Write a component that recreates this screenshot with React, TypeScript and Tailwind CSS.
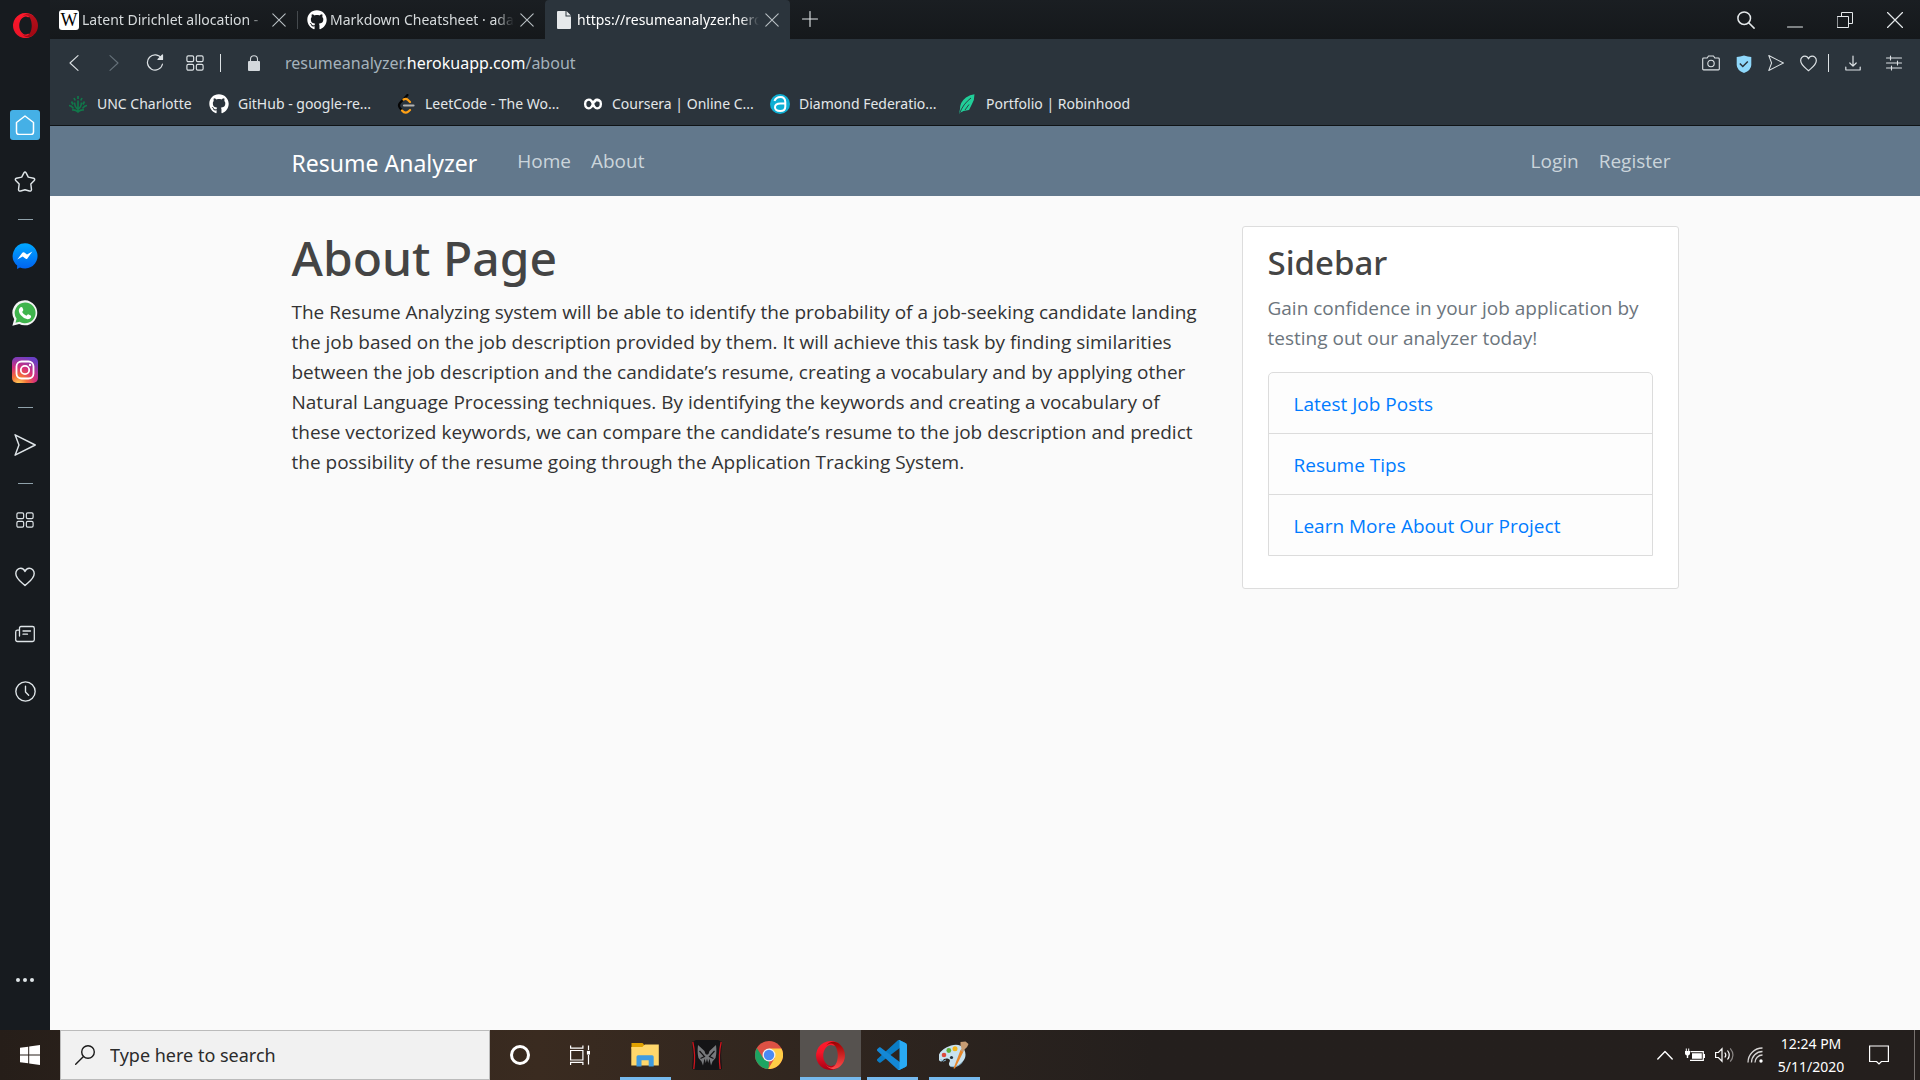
import React from 'react';
import { FaGithub } from 'react-icons/fa';

type SvgProps = { children: React.ReactNode; box?: string; className?: string; width?: number };

function Line({ children, box = '0 0 20 20', className = 'size-5', width = 1.2 }: SvgProps) {
  return (
    <svg
      viewBox={box}
      className={className}
      fill="none"
      stroke="currentColor"
      strokeWidth={width}
      strokeLinecap="round"
      strokeLinejoin="round"
      aria-hidden="true"
    >
      {children}
    </svg>
  );
}

function OperaLogo({ className, id, lit }: { className: string; id: string; lit?: boolean }) {
  return (
    <svg viewBox="0 0 30 30" className={className} aria-hidden="true">
      <defs>
        <linearGradient id={id + 'a'} x1="0" y1="0" x2="0" y2="1">
          <stop offset="0" stopColor="#ff1b2d" />
          <stop offset="0.4" stopColor="#f41529" />
          <stop offset="1" stopColor={lit ? '#a70014' : '#ec1528'} />
        </linearGradient>
        <linearGradient id={id + 'b'} x1="0" y1="0" x2="0" y2="1">
          <stop offset="0" stopColor={lit ? '#9c0000' : '#b8101c'} />
          <stop offset="1" stopColor={lit ? '#ff4b4b' : '#a00812'} />
        </linearGradient>
      </defs>
      <path
        fill={`url(#${id}a)`}
        fillRule="evenodd"
        d="M15 0a15 15 0 1 0 10 26.2L18 25C14 28 7.500 23 7.500 15S14 2 18 5L25 3.800A15 15 0 0 0 15 0Z"
      />
      <path
        fill={`url(#${id}b)`}
        d="M10 5.600C11.800 3.500 13.600 2.600 15.500 2.600 19.600 2.600 22.500 8 22.500 15S19.600 27.400 15.500 27.400C13.600 27.400 11.800 26.500 10 24.400 14 30.500 20.500 30.200 25 26.200 28.200 23.400 30 19.400 30 15S28.200 6.600 25 3.800C20.500-.2 14-.5 10 5.600Z"
      />
    </svg>
  );
}

const Home = () => (
  <span className="flex size-[30px] items-center justify-center rounded-[3px] bg-[#45b0e6] text-white">
    <Line className="size-5" width={1.5}>
      <path d="M10 1 1.500 7.500V17q0 2.500 2.500 2.500h12q2.500 0 2.500-2.500V7.500Z" />
    </Line>
  </span>
);
const Star = () => (
  <Line className="size-[22px]" width={1.3}>
    <path d="M9 1.700q1-1.600 2 0l2 3.900 4.800 1q1.700.6.600 2L15.300 11.800l.6 5.200q-.2 1.700-1.900 1.200L10 17l-4 1.200q-1.700.5-1.900-1.200l.6-5.200L1.600 8.600q-1.100-1.400.6-2l4.800-1Z" />
  </Line>
);
const Send = ({ className = 'size-[22px]' }: { className?: string }) => (
  <Line className={className} width={1.3}>
    <path d="M1 .7 19.300 10 1 19.300 4.500 10Z" />
  </Line>
);
const Heart = ({ className = 'size-5' }: { className?: string }) => (
  <Line className={className} width={1.4}>
    <path d="M10 4.500C9 2 7.500 1.300 5.800 1.300 3 1.300.8 3.500.8 6.500.8 12 6.500 15 10 18.500 13.500 15 19.200 12 19.200 6.500c0-3-2.200-5.200-5-5.200C12.500 1.300 11 2 10 4.500Z" />
  </Line>
);
const Tiles = ({ className = 'size-[18px]' }: { className?: string }) => (
  <Line className={className} width={1.3}>
    <rect x="1" y="2" width="7.500" height="6.500" rx="1.500" />
    <rect x="11.500" y="2" width="7.500" height="6.500" rx="1.500" />
    <rect x="1" y="11.500" width="7.500" height="6.500" rx="1.500" />
    <rect x="11.500" y="11.500" width="7.500" height="6.500" rx="1.500" />
  </Line>
);
const News = () => (
  <Line className="size-5" width={1.3}>
    <path d="M4.500 12V4q0-1.500 1.500-1.500h11.500q1.800 0 1.800 1.800v11.400q0 1.800-1.800 1.800H2.500Q.7 17.500.7 15.700V8q0-1.800 1.800-1.800h2M8 7h7.500M8 10.200h4.500" />
  </Line>
);
const Clock = () => (
  <Line className="size-[21px]" width={1.3}>
    <circle cx="10" cy="10" r="9.200" />
    <path d="M10 5v5.500l3 3" />
  </Line>
);
const Messenger = () => (
  <svg viewBox="0 0 26 26" className="size-[26px]" aria-hidden="true">
    <defs>
      <linearGradient id="msg" x1="0" y1="0" x2="0" y2="1">
        <stop offset="0" stopColor="#00a8ff" />
        <stop offset="1" stopColor="#0062f0" />
      </linearGradient>
    </defs>
    <path fill="url(#msg)" d="M13 .3a12.600 12.600 0 1 1-5 24.200L5 26l.2-3.500A12.600 12.600 0 0 1 13 .3Z" />
    <path fill="#fff" d="m5.300 16.400 5-6.600q.9-1 2.100-.2l2.600 2 5.400-3.200-5 7q-.9 1-2.100.1l-2.600-2Z" />
  </svg>
);
const Whatsapp = () => (
  <svg viewBox="0 0 26 26" className="size-[26px]" aria-hidden="true">
    <path fill="#f4f4f4" d="M13 .3A12.500 12.500 0 1 1 7.200 24L.4 25.800l1.800-6.600A12.500 12.500 0 0 1 13 .3Z" />
    <path fill="#3fb44c" d="M13 2.500A10.400 10.400 0 1 1 7.600 21.700L3.500 22.800l1.100-4A10.400 10.400 0 0 1 13 2.500Z" />
    <path
      fill="#fff"
      d="M8.500 7.200q1.400-.8 1.900.4l.9 2.200q.2.700-1.200 2.100 1.600 2.900 4.300 3.900 1.100-1.600 1.800-1.500l2.500 1.200q.8.500.2 1.900-1.100 2-3.400 1.800-3.700-.5-6.600-4-2.700-3.300-1.900-6 .4-1.200 1.500-2Z"
    />
  </svg>
);
const Instagram = () => (
  <svg viewBox="0 0 26 26" className="size-[26px]" aria-hidden="true">
    <defs>
      <radialGradient id="ig" cx="0.25" cy="1.05" r="1.1">
        <stop offset="0" stopColor="#ffd65a" />
        <stop offset="0.3" stopColor="#f5703a" />
        <stop offset="0.6" stopColor="#d62f7c" />
        <stop offset="1" stopColor="#6a3fc4" />
      </radialGradient>
    </defs>
    <rect width="26" height="26" rx="5" fill="url(#ig)" />
    <g fill="none" stroke="#fff" strokeWidth="1.800">
      <rect x="4.500" y="4.500" width="17" height="17" rx="5" />
      <circle cx="13" cy="13" r="4.200" />
    </g>
    <circle cx="18" cy="8" r="1.200" fill="#fff" />
  </svg>
);

function RailGroup({ items }: { items: [string, React.ReactNode][] }) {
  return (
    <div className="flex w-full flex-col gap-px">
      {items.map(([name, icon]) => (
        <button key={name} type="button" aria-label={name} className="flex h-14 w-full items-center justify-center">
          {icon}
        </button>
      ))}
    </div>
  );
}
const Dash = () => (
  <div className="flex h-[18px] items-center">
    <div className="h-px w-[15px] bg-[#8fa1aa]" />
  </div>
);

function Rail() {
  return (
    <aside className="flex w-[50px] shrink-0 flex-col items-center bg-[#171b1f] text-[#dfe5e8]">
      <button type="button" aria-label="Opera menu" className="mb-[59px] flex pt-[13px]">
        <OperaLogo id="rail" className="size-[25px]" />
      </button>
      <RailGroup items={[['Home', <Home />], ['Bookmarks', <Star />]]} />
      <Dash />
      <RailGroup items={[['Messenger', <Messenger />], ['WhatsApp', <Whatsapp />], ['Instagram', <Instagram />]]} />
      <Dash />
      <div className="w-full py-px">
        <RailGroup items={[['My Flow', <Send />]]} />
      </div>
      <Dash />
      <RailGroup items={[['Speed Dial', <Tiles />], ['Likes', <Heart />], ['News', <News />], ['History', <Clock />]]} />
      <button type="button" aria-label="More" className="mt-auto mb-10 flex h-5 w-full items-center justify-center">
        <svg viewBox="0 0 18 4" className="h-1 w-[18px]" fill="currentColor" aria-hidden="true">
          <circle cx="2" cy="2" r="2" />
          <circle cx="9" cy="2" r="2" />
          <circle cx="16" cy="2" r="2" />
        </svg>
      </button>
    </aside>
  );
}

const Cross = () => (
  <Line box="0 0 14 14" className="size-3.5" width={1.1}>
    <path d="M.8.8l12.400 12.400M13.200.8.8 13.200" />
  </Line>
);

function Tab({ icon, title, active }: { icon: React.ReactNode; title: string; active?: boolean }) {
  return (
    <div
      className={
        active
          ? 'flex w-[245px] items-center rounded-t bg-[#2b343c] pr-[11px] pl-[9px] text-white'
          : 'flex w-[247px] items-center pr-[11px] pl-[9px] text-[#d6dadc]'
      }
    >
      <span className="flex w-5 shrink-0 justify-center">{icon}</span>
      <button
        type="button"
        className="ml-[3px] min-w-0 flex-1 overflow-hidden text-left text-sm whitespace-nowrap [mask-image:linear-gradient(to_right,black_90%,transparent_100%)]"
      >
        {title}
      </button>
      <button type="button" aria-label={'Close ' + title} className="ml-1.5 text-[#b9c0c4]">
        <Cross />
      </button>
    </div>
  );
}

const Wiki = () => (
  <span className="flex size-5 items-center justify-center rounded-[3px] bg-white font-['Liberation_Serif',serif] text-lg leading-none text-black">
    W
  </span>
);
const PageIcon = () => (
  <svg viewBox="0 0 14 18" className="h-[18px] w-3.5" aria-hidden="true">
    <path fill="#e6e9eb" d="M1 0h7.500v5.500H14V17q0 1-1 1H1q-1 0-1-1V1q0-1 1-1ZM9.500 0 14 4.500H9.500Z" />
  </svg>
);

function TabStrip() {
  return (
    <header className="flex h-[39px] bg-linear-to-b from-[#1a1e22] to-[#15181b] text-[#e4e8ea]">
      <Tab icon={<Wiki />} title="Latent Dirichlet allocation -" />
      <div className="my-auto h-[18px] w-px bg-[#454a4e]" />
      <Tab icon={<FaGithub className="size-5 text-white" />} title="Markdown Cheatsheet · ada" />
      <Tab active icon={<PageIcon />} title="https://resumeanalyzer.hero" />
      <button type="button" aria-label="New tab" className="ml-3 pb-0.5">
        <Line box="0 0 16 16" className="size-4" width={1.1}>
          <path d="M8 .5v15M.5 8h15" />
        </Line>
      </button>
      <div className="ml-auto flex items-center gap-8 pr-[17px]">
        <button type="button" aria-label="Search tabs">
          <Line className="size-[18px]" width={1.7}>
            <circle cx="8" cy="8" r="7" />
            <path d="m13 13 6 6" />
          </Line>
        </button>
        <button type="button" aria-label="Minimize">
          <Line box="0 0 16 16" className="size-4" width={1.1}>
            <path d="M.5 15h15" />
          </Line>
        </button>
        <button type="button" aria-label="Restore" className="ml-0.5">
          <Line box="0 0 16 16" className="size-4" width={1}>
            <path d="M.5 4.500h11v11h-11zM4.500 4.500v-4h11v11h-4" />
          </Line>
        </button>
        <button type="button" aria-label="Close window" className="ml-0.5">
          <Line box="0 0 16 16" className="size-4" width={1.2}>
            <path d="m.5.5 15 15M15.500.5l-15 15" />
          </Line>
        </button>
      </div>
    </header>
  );
}

function AddressBar() {
  return (
    <div className="flex h-12 items-center pr-[17px] pl-4 text-[#dde2e5]">
      <button type="button" aria-label="Back" className="flex w-4 justify-center">
        <Line box="0 0 10 16" className="h-4 w-2.5" width={1.1}>
          <path d="M9 .7 1 8l8 7.300" />
        </Line>
      </button>
      <button type="button" aria-label="Forward" disabled className="ml-6 flex w-4 justify-center text-[#66717a]">
        <Line box="0 0 10 16" className="h-4 w-2.5" width={1.1}>
          <path d="m1 .7 8 7.300-8 7.300" />
        </Line>
      </button>
      <button type="button" aria-label="Reload" className="ml-6">
        <Line box="0 0 18 18" className="size-[18px]" width={1.2}>
          <path d="M15.600 4.600A7.600 7.600 0 1 0 16.500 10" />
          <path d="M16.500 1v4.500H12Z" fill="currentColor" />
        </Line>
      </button>
      <button type="button" aria-label="Speed Dial" className="ml-[22px]">
        <Tiles />
      </button>
      <div className="ml-4 h-[18px] w-px bg-[#dde2e5]" />
      <svg viewBox="0 0 12 16" className="ml-[27px] h-4 w-3" aria-hidden="true">
        <rect y="6" width="12" height="10" rx="1" fill="#d3d8dc" />
        <path d="M2.500 6.500V4.200a3.500 3.500 0 0 1 7 0v2.300" fill="none" stroke="#d3d8dc" strokeWidth="1.100" />
      </svg>
      <p className="ml-[25px] flex-1 text-base text-[#a5b2bb]">
        resumeanalyzer.<span className="text-white">herokuapp.com</span>/about
      </p>
      <div className="flex items-center gap-4">
        <button type="button" aria-label="Snapshot">
          <Line box="0 0 18 16" className="h-4 w-[18px]" width={1.1}>
            <path d="M1.600 3h3.600l1.300-2h5l1.300 2h3.600q.9 0 .9.900V14q0 .9-.9.900H1.600Q.7 14.900.7 14V3.900Q.7 3 1.600 3Z" />
            <circle cx="9" cy="8.500" r="3.200" />
          </Line>
        </button>
        <button type="button" aria-label="Ad blocker">
          <svg viewBox="0 0 16 18" className="mt-0.5 h-[18px] w-4" aria-hidden="true">
            <path fill="#8fd8fb" d="M8 .5q4 1.200 7.300 1.500v8q0 5-7.300 8-7.300-3-7.300-8V2Q4 1.700 8 .5Z" />
            <path d="m3.800 8.500 3 3 5-5" fill="none" stroke="#2b343c" strokeWidth="1.500" />
          </svg>
        </button>
        <button type="button" aria-label="Send to My Flow">
          <Send className="size-4" />
        </button>
        <button type="button" aria-label="Add to bookmarks">
          <Heart className="size-[17px]" />
        </button>
      </div>
      <div className="ml-[11px] h-[18px] w-px bg-[#dde2e5]" />
      <button type="button" aria-label="Downloads" className="ml-4">
        <Line box="0 0 16 16" className="size-4" width={1.2}>
          <path d="M8 1v10M4.800 8 8 11.200 11.200 8M.8 12v2.400q0 .6.600.6h13.200q.6 0 .6-.6V12" />
        </Line>
      </button>
      <button type="button" aria-label="Easy setup" className="mr-px ml-[25px]">
        <Line box="0 0 16 16" className="size-4" width={1.1}>
          <path d="M.5 3h15M.5 8h15M.5 13h15M4.500 1v4M11.500 6v4M5.500 11v4" />
        </Line>
      </button>
    </div>
  );
}

const Crown = () => (
  <svg viewBox="0 0 20 18" className="h-[18px] w-5" fill="none" stroke="#11774a" strokeWidth="1.700" aria-hidden="true">
    <path d="M10 1v3M6 3l1.200 2.500M14 3l-1.200 2.500M10 5.500V17M6.500 7.500Q7 13 10 14q3-1 3.500-6.500M3.500 6.500l1.500 3M16.500 6.500l-1.500 3M1 10.500q2.500 0 4.500 3M19 10.500q-2.500 0-4.500 3M4 15q3.500-.5 6 2 2.500-2.500 6-2" />
  </svg>
);
const Infinity8 = () => (
  <svg viewBox="0 0 20 12" className="h-3 w-5" fill="none" stroke="#fff" strokeWidth="2.400" aria-hidden="true">
    <path d="M16 3.200C14 .6 11.500 1.500 10 6S6 11 3.800 9.800 1.500 3.500 3.800 2.200 8.500 1.500 10 6s4 5 6.200 3.800 2.300-6.300 0-7.600-4.200.6-5 1.800" />
  </svg>
);
const Diamond = () => (
  <svg viewBox="0 0 20 20" className="size-5" aria-hidden="true">
    <circle cx="10" cy="10" r="10" fill="#0fafd4" />
    <path
      d="M4.500 7Q6 3 10.500 3t4.800 5v4.500q0 4.500-5 4.500-5.300 0-5.300-3.700T10.500 9.500h4.500"
      fill="none"
      stroke="#fff"
      strokeWidth="2"
    />
  </svg>
);
const Feather = () => (
  <svg viewBox="0 0 18 20" className="h-5 w-[18px]" aria-hidden="true">
    <path fill="#21ce99" d="M1 20 2 15Q2 8 8 3.500 12 .5 16.500.2 16.500 6 14 10L11 16 5.500 17 2.500 18.500Z" />
    <path d="M1.500 19.500Q5 10 13 4M7 16l4-5.500" fill="none" stroke="#2b343c" strokeWidth="0.900" />
  </svg>
);
const Leet = () => (
  <svg viewBox="0 0 18 20" className="h-5 w-[18px]" fill="none" strokeWidth="2.200" strokeLinecap="round" aria-hidden="true">
    <path d="M10.500 1 3 9q-2 2.500 0 5l1.500 1.700" stroke="#050505" />
    <path d="M6.500 5.500q2.500-1.500 4.500.5l2 2M5 16.500q3 3.500 6.200 1.200l1.800-1.700" stroke="#ffa116" />
    <path d="M7 11.500h9.500" stroke="#b3b3b3" />
  </svg>
);

const bookmarks: [string, React.ReactNode][] = [
  ['UNC Charlotte', <Crown />],
  ['GitHub - google-re...', <FaGithub className="size-5 text-white" />],
  ['LeetCode - The Wo...', <Leet />],
  ['Coursera | Online C...', <Infinity8 />],
  ['Diamond Federatio...', <Diamond />],
  ['Portfolio | Robinhood', <Feather />],
];

function Bookmarks() {
  return (
    <nav aria-label="Bookmarks bar" className="flex h-[39px] border-b border-[#0f1316] pb-1 pl-[18px]">
      {bookmarks.map(([label, icon], i) => (
        <a
          key={label}
          href="#bookmark"
          className={
            i === 0
              ? 'flex w-[141px] items-center gap-[9px] text-sm whitespace-nowrap text-[#e3e7e9]'
              : 'flex w-[187px] items-center gap-[9px] text-sm whitespace-nowrap text-[#e3e7e9]'
          }
        >
          <span className="flex w-5 justify-center">{icon}</span>
          {label}
        </a>
      ))}
    </nav>
  );
}

function SitePage() {
  return (
    <div className="flex-1 bg-[#fafafa] font-['Open_Sans','Noto_Sans',sans-serif] text-[#333333]">
      <nav aria-label="Main" className="bg-[#62788c]">
        <div className="mx-auto flex h-[70px] max-w-[1425px] items-center px-[19px] text-[19px] text-[#cbd5db]">
          <a href="#top" className="mr-[30px] pt-1 font-['Noto_Sans',sans-serif] text-[23px] leading-8 text-white">
            Resume Analyzer
          </a>
          <a href="#home" className="px-2.5">
            Home
          </a>
          <a href="#about" className="px-2.5">
            About
          </a>
          <a href="#login" className="ml-auto px-2.5">
            Login
          </a>
          <a href="#register" className="pr-2 pl-2.5">
            Register
          </a>
        </div>
      </nav>
      <main className="mx-auto flex max-w-[1425px] items-start pt-[30px] text-[19px] leading-[30px]">
        <article className="w-2/3 px-[19px] pt-0.5">
          <h1 className="mb-[9px] font-['Noto_Sans',sans-serif] text-[48px] leading-[60px] font-medium text-[#444444]">
            About Page
          </h1>
          <p>
            The Resume Analyzing system will be able to identify the probability of a job-seeking candidate landing the
            job based on the job description provided by them. It will achieve this task by finding similarities
            between the job description and the candidate’s resume, creating a vocabulary and by applying other Natural
            Language Processing techniques. By identifying the keywords and creating a vocabulary of these vectorized
            keywords, we can compare the candidate’s resume to the job description and predict the possibility of the
            resume going through the Application Tracking System.
          </p>
        </article>
        <div className="w-1/3 px-[19px]">
          <aside className="rounded-[3px] border border-[#dddddd] bg-white px-[25px] pt-[15px] pb-8">
            <h2 className="mb-[9px] font-['Noto_Sans',sans-serif] text-[33px] leading-[42px] font-medium text-[#444444]">
              Sidebar
            </h2>
            <p className="mb-[19px] text-[#6c757d]">
              Gain confidence in your job application by testing out our analyzer today!
            </p>
            <ul className="divide-y divide-[#dcdcdc] rounded-t-[5px] border border-[#dcdcdc] bg-[#fdfdfd]">
              {['Latest Job Posts', 'Resume Tips', 'Learn More About Our Project'].map((t) => (
                <li key={t} className="px-[25px] pt-4 pb-3.5">
                  <a href="#link" className="text-[#007bff]">
                    {t}
                  </a>
                </li>
              ))}
            </ul>
          </aside>
        </div>
      </main>
    </div>
  );
}

const Explorer = () => (
  <svg viewBox="0 0 28 24" className="h-6 w-7" aria-hidden="true">
    <path fill="#e0a100" d="M.5 0h10.500q1 0 1.500 1l.8 1.500V6H.5Z" />
    <path fill="#ffd76b" d="M.3 4h11l2.500-2.500h14V22.500H.3Z" />
    <path fill="#3f9be0" d="M5.500 23.500V13.800q0-1.600 1.600-1.600h14q1.600 0 1.600 1.600v9.700h-5v-6.300h-7.200v6.300Z" />
  </svg>
);
const Predator = () => (
  <svg viewBox="0 0 30 30" className="size-[30px]" aria-hidden="true">
    <path fill="#141416" d="M4 0h22l4 2-1 13 1 14-4 1H4l-4-1 1-14L0 2Z" />
    <path d="M.8 2q3 13 1 27M29.200 2q-3 13-1 27" stroke="#d0141c" strokeWidth="1.300" fill="none" />
    <path
      fill="#77797c"
      d="m6 5 6.500 6 1 3 1.500.8 1.500-.8 1-3L24 5q1 8-.5 13l-3 3.500-1.500 4-1.500-7-1.300 4.500-1.200-4.500-1.200 4.500-1.300-4.500-1.500 7-1.500-4-3-3.500Q5 13 6 5Z"
    />
    <path d="m7.500 11 5 5.500-4 2M22.500 11l-5 5.500 4 2" stroke="#141416" strokeWidth="1.200" fill="none" />
  </svg>
);
const Chrome = () => (
  <svg viewBox="0 0 28 28" className="size-7" aria-hidden="true">
    <circle cx="14" cy="14" r="14" fill="#dd5144" />
    <path fill="#1da462" d="M1.880 7 8.370 17.500 14 20.500 13.500 28A14 14 0 0 1 1.880 7Z" />
    <path fill="#ffcd46" d="M14 7.500h12.400A14 14 0 0 1 13.200 28L19.600 17.300Z" />
    <circle cx="14" cy="14" r="6.500" fill="#f1f1f1" />
    <circle cx="14" cy="14" r="5.200" fill="#4a8af4" />
  </svg>
);
const Code = () => (
  <svg viewBox="0 0 100 100" className="size-[30px]" aria-hidden="true">
    <path
      fill="#0a7cc4"
      d="M96.460 10.800 75.860.880C73.470-.27 70.620.210 68.750 2.080L1.300 63.580c-1.810 1.660-1.810 4.520 0 6.170l5.510 5c1.490 1.350 3.720 1.450 5.320.24L93.360 13.370C96.090 11.300 100 13.250 100 16.670v-.24c0-2.400-1.380-4.590-3.540-5.630Z"
    />
    <path
      fill="#1488d6"
      d="m96.460 89.200-20.600 9.920c-2.390 1.150-5.240.670-7.110-1.200L1.300 36.420c-1.810-1.660-1.810-4.520 0-6.170l5.510-5c1.490-1.350 3.720-1.450 5.320-.24L93.360 86.630C96.090 88.700 100 86.750 100 83.330v.24c0 2.400-1.380 4.590-3.540 5.630Z"
    />
    <path
      fill="#29aaf4"
      d="M75.860 99.130c-2.390 1.150-5.240.660-7.110-1.210C71.060 100.220 75 98.590 75 95.330V4.670c0-3.260-3.940-4.900-6.250-2.590C70.620.210 73.470-.27 75.860.870l20.600 9.910C98.620 11.820 100 14.010 100 16.410v67.180c0 2.400-1.380 4.590-3.540 5.630Z"
    />
  </svg>
);
const Paint = () => (
  <svg viewBox="0 0 30 30" className="size-[30px]" aria-hidden="true">
    <path
      fill="#c8e2ef"
      d="M12 5.500Q21 3 25 9q4 8-2.500 14-6 5.500-11 3.500-2.500-1.500-1-4.500t-2-3.500-5 2-4.500-1.500Q-.5 9.500 12 5.500Z"
    />
    <path d="M1.500 19.500q3 3 5.500.5M11.500 26.500q7 1.500 12-4.500" stroke="#7fb0cc" strokeWidth="1" fill="none" />
    <circle cx="5" cy="15" r="2.300" fill="#dc4a3d" />
    <circle cx="9.800" cy="10.500" r="2.400" fill="#5fae3a" />
    <circle cx="16" cy="8.800" r="2.500" fill="#f3b41b" />
    <circle cx="12.500" cy="17.500" r="1.600" fill="#24313c" />
    <path d="M14.500 28.500 21.500 10l3 1.500L16 28.500Z" fill="#e8872b" />
    <path d="M22.500 8.500q-1.500-4-1-6.500l5-.5 3 2.500q-1 3.500-4 5.500l-1.500 2.500-2.500-1.500Z" fill="#c79c73" />
  </svg>
);

function TaskButton({ label, icon, open, focused }: { label: string; icon: React.ReactNode; open?: boolean; focused?: boolean }) {
  return (
    <button
      type="button"
      aria-label={label}
      className={
        focused
          ? 'flex h-full w-[61px] flex-col items-center bg-[#56524f]'
          : 'flex h-full w-[62px] flex-col items-center'
      }
    >
      <span className="flex flex-1 items-center pt-[3px]">{icon}</span>
      <span className={focused ? 'h-[3px] w-full bg-[#76b9ed]' : open ? 'h-[3px] w-[51px] bg-[#76b9ed]' : 'h-[3px]'} />
    </button>
  );
}

function Taskbar() {
  return (
    <footer className="flex h-[50px] items-center bg-linear-to-r from-[#261e19] from-0% via-[#3a2b20] via-28% to-[#241f1d] to-60% text-white">
      <button type="button" aria-label="Start" className="flex w-[60px] justify-center">
        <svg viewBox="0 0 20 20" className="size-5" fill="#fff" aria-hidden="true">
          <path d="M0 2.800 8.200 1.700V9.500H0ZM9.200 1.500 20 0v9.500H9.200ZM0 10.500h8.200v7.800L0 17.200ZM9.200 10.500H20V20L9.200 18.500Z" />
        </svg>
      </button>
      <label className="flex h-full w-[430px] items-center gap-[15px] border border-[#bbbbbb] bg-[#f1f1f1] pl-3.5 text-[#1a1a1a]">
        <Line className="size-5" width={1.4}>
          <circle cx="13" cy="7" r="6.300" />
          <path d="M8.500 11.500.7 19.300" />
        </Line>
        <input
          type="text"
          aria-label="Type here to search"
          placeholder="Type here to search"
          className="min-w-0 flex-1 bg-transparent text-lg outline-none placeholder:text-[#2b2b2b]"
        />
      </label>
      <button type="button" aria-label="Cortana" className="flex w-[60px] justify-center">
        <span className="size-5 rounded-full border-[3px] border-white" />
      </button>
      <button type="button" aria-label="Task View" className="mr-1 flex w-[60px] justify-center">
        <svg viewBox="0 0 20 20" className="size-5" fill="none" stroke="#fff" strokeWidth="1.200" aria-hidden="true">
          <path d="M.6 5.500h12.300v9.500H.6zM.6 .5v2.700h12.300V.5M.6 20v-2.700h12.300V20M18.500.5v4.500M18.500 10v9.500" />
          <rect x="17.500" y="6.500" width="2" height="2.500" fill="#fff" />
        </svg>
      </button>
      <TaskButton label="File Explorer" icon={<Explorer />} open />
      <TaskButton label="PredatorSense" icon={<Predator />} />
      <TaskButton label="Google Chrome" icon={<Chrome />} />
      <TaskButton label="Opera" icon={<OperaLogo id="task" lit className="size-[29px]" />} focused />
      <TaskButton label="Visual Studio Code" icon={<Code />} open />
      <TaskButton label="Paint" icon={<Paint />} open />
      <div className="ml-auto flex h-full items-center">
        <button type="button" aria-label="Show hidden icons">
          <Line box="0 0 16 10" className="h-2.5 w-4" width={1.4}>
            <path d="m.8 9 7.200-7.500L15.200 9" />
          </Line>
        </button>
        <svg viewBox="0 0 20 14" className="ml-3 h-3.5 w-5" aria-hidden="true">
          <path d="M5.500 3.700h12.800v8.600H5M19.500 6v4" fill="none" stroke="#fff" strokeWidth="1.200" />
          <path d="M7 5.200h9.800v5.600H7ZM0 3h5v2.500q0 1.500-1.800 2V10H1.800V7.500Q0 7 0 5.500ZM.8.500h1V3h-1ZM3.200.5h1V3h-1Z" fill="#fff" />
        </svg>
        <svg viewBox="0 0 20 18" className="ml-2.5 h-[18px] w-5" fill="none" strokeWidth="1.200" aria-hidden="true">
          <path d="M.6 6.500h2.800L7 2.800v12.400L3.400 11.500H.6ZM9.800 6.500q2 2.500 0 5M12.500 4.500q3.500 4.500 0 9" stroke="#fff" />
          <path d="M15.200 2.300q5.500 6.700 0 13.400" stroke="#8a8684" />
        </svg>
        <svg viewBox="0 0 16 16" className="ml-3 size-4" fill="none" stroke="#d8d6d5" strokeWidth="1.300" aria-hidden="true">
          <path d="M1 15.500A14.500 14.500 0 0 1 15.500 1M4.500 15.500a11 11 0 0 1 11-11M8 15.500a7.500 7.500 0 0 1 7.500-7.500" />
          <circle cx="14" cy="14" r="1.700" fill="#fff" stroke="none" />
        </svg>
        <time className="ml-2.5 w-[76px] text-center text-sm leading-[23px]">
          12:24&nbsp;PM
          <br />
          5/11/2020
        </time>
        <button type="button" aria-label="Notifications" className="ml-5">
          <svg viewBox="0 0 20 20" className="size-5" fill="none" stroke="#fff" strokeWidth="1.200" aria-hidden="true">
            <path d="M.6 1h18.800v15.500h-7L10 19l-2.400-2.500h-7Z" />
          </svg>
        </button>
        <div className="mr-[5px] ml-[25px] h-full w-px bg-[#77726f]" />
      </div>
    </footer>
  );
}

export default function App() {
  return (
    <div className="flex min-h-screen flex-col font-['Noto_Sans',sans-serif]">
      <div className="flex flex-1">
        <Rail />
        <div className="flex min-w-0 flex-1 flex-col">
          <TabStrip />
          <div className="bg-[#2b343c]">
            <AddressBar />
            <Bookmarks />
          </div>
          <SitePage />
        </div>
      </div>
      <Taskbar />
    </div>
  );
}
